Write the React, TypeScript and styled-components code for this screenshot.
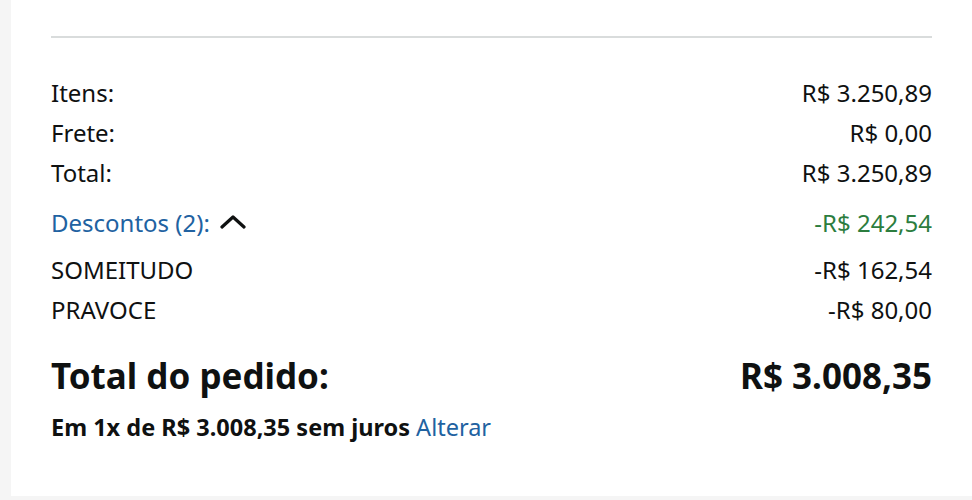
import styled, { createGlobalStyle } from "styled-components";

const GlobalStyle = createGlobalStyle`
  body {
    margin: 0;
    background-color: #f5f5f5;
    font-family: "Noto Sans", "Open Sans", Arial, sans-serif;
    color: #0f1111;
  }
`;

const Panel = styled.div`
  margin-left: 11px;
  background-color: #ffffff;
  padding: 36px 40px 0 40px;
  height: 460px;
`;
const Divider = styled.hr`
  margin: 0 0 34px 0;
  border: none;
  border-top: 2px solid #d9dcdc;
`;
const Row = styled.div<{ $gap?: number }>`
  display: flex;
  justify-content: space-between;
  align-items: center;
  height: 40px;
  font-size: 24px;
  margin-top: ${(props) => props.$gap ?? 0}px;
`;
const LinkText = styled.span`
  color: #2162a1;
  cursor: pointer;
`;
const Toggle = styled.span`
  display: flex;
  align-items: center;
  gap: 10px;
`;
const Saving = styled.span<{ $green?: boolean }>`
  color: ${(props) => (props.$green ? "#2c7d3e" : "#0f1111")};
`;
const GrandTotal = styled.div`
  display: flex;
  justify-content: space-between;
  align-items: center;
  height: 48px;
  margin-top: 22px;
  font-size: 35px;
  font-weight: 700;
`;
const Installments = styled.div`
  margin-top: 13px;
  line-height: 30px;
  font-size: 23.5px;
  font-weight: 700;
  a {
    font-weight: 400;
    color: #2162a1;
    text-decoration: none;
  }
`;

function Chevron() {
  return (
    <svg width="26" height="16" viewBox="0 0 26 16">
      <path
        d="M2 13 L13 3 L24 13"
        fill="none"
        stroke="#0f1111"
        strokeWidth="3.2"
        strokeLinecap="round"
        strokeLinejoin="round"
      />
    </svg>
  );
}

const summary = [
  { label: "Itens:", value: "R$ 3.250,89" },
  { label: "Frete:", value: "R$ 0,00" },
  { label: "Total:", value: "R$ 3.250,89" },
];

const discounts = [
  { code: "SOMEITUDO", value: "-R$ 162,54" },
  { code: "PRAVOCE", value: "-R$ 80,00" },
];

export default function App() {
  return (
    <>
      <GlobalStyle />
      <Panel>
        <Divider />
        {summary.map((item) => (
          <Row key={item.label}>
            <span>{item.label}</span>
            <span>{item.value}</span>
          </Row>
        ))}
        <Row $gap={10}>
          <Toggle>
            <LinkText>Descontos (2):</LinkText>
            <Chevron />
          </Toggle>
          <Saving $green>-R$ 242,54</Saving>
        </Row>
        {discounts.map((d, i) => (
          <Row key={d.code} $gap={i === 0 ? 7 : 0}>
            <span>{d.code}</span>
            <Saving>{d.value}</Saving>
          </Row>
        ))}
        <GrandTotal>
          <span>Total do pedido:</span>
          <span>R$ 3.008,35</span>
        </GrandTotal>
        <Installments>
          Em 1x de R$ 3.008,35 sem juros <a href="#">Alterar</a>
        </Installments>
      </Panel>
    </>
  );
}
